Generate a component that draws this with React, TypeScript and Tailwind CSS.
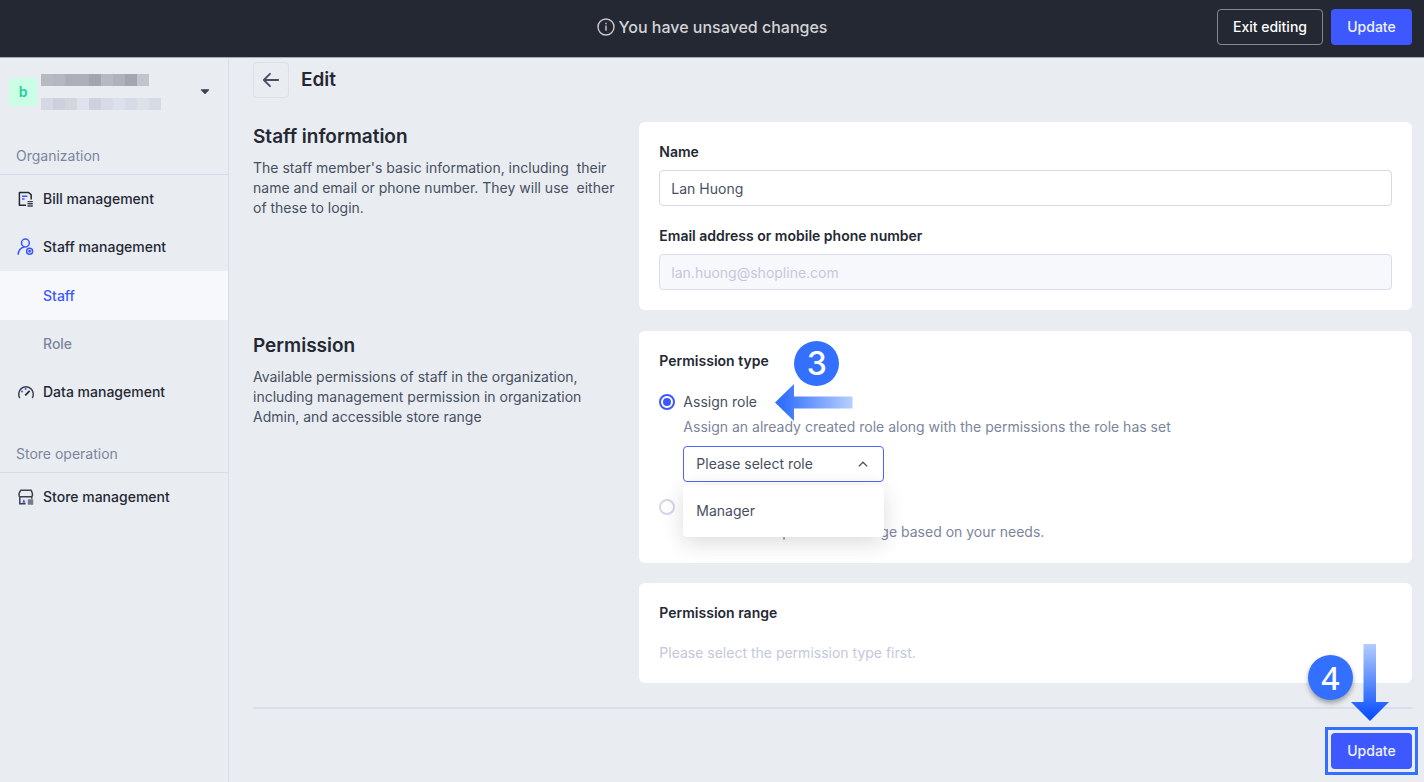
import { useState, type ReactNode } from "react";

const nameBlocks = ["bg-[#b8bac2]", "bg-[#b5b7bf]", "bg-[#adafb7]", "bg-[#adafb7]", "bg-[#a3a5af]", "bg-[#b7b9c1]", "bg-[#b0b2ba]", "bg-[#a3a5af]", "bg-[#c2c4cd]"];
const idBlocks = ["bg-[#d6d9e3]", "bg-[#cdd0dd]", "bg-[#d3d6df]", "bg-[#dfe2ec]", "bg-[#cfd2dc]", "bg-[#d7dae4]", "bg-[#dce0ea]", "bg-[#d6dae5]", "bg-[#dce0e9]", "bg-[#d6dae4]"];

function BillIcon() {
  return (
    <svg width="18" height="18" viewBox="0 0 18 18" fill="none" aria-hidden="true">
      <path d="M9 15.2H2.4V2.500h9.200l2.600 2.400v4.600" stroke="#242833" strokeWidth="1.5" strokeLinejoin="round" />
      <path d="M5 6.2h5.4M5 9h2.6" stroke="#3b56ff" strokeWidth="1.4" />
      <path d="M10.5 11.6h5.3M10.5 13.8h5.3M10.5 16h5.3" stroke="#3c404b" strokeWidth="1.4" />
    </svg>
  );
}

function StaffIcon() {
  return (
    <svg width="18" height="18" viewBox="0 0 18 18" fill="none" stroke="#3b56ff" strokeWidth="1.5" aria-hidden="true">
      <circle cx="8.4" cy="5" r="3.9" />
      <path d="M1.2 16.8c.1-4.2 2.4-6.9 6.2-7.7" />
      <circle cx="12.6" cy="13.2" r="3" />
      <circle cx="12.6" cy="13.2" r="0.7" />
    </svg>
  );
}

function DataIcon() {
  return (
    <svg width="18" height="18" viewBox="0 0 18 18" fill="none" aria-hidden="true">
      <path d="M2.8 15A7.3 7.3 0 1 1 15.2 15" stroke="#3c404b" strokeWidth="1.5" />
      <path d="M8.2 12.4l4.4-4.6" stroke="#242833" strokeWidth="1.7" />
      <circle cx="5" cy="8.6" r="1" fill="#3b56ff" />
      <circle cx="8.6" cy="6" r="1" fill="#3b56ff" />
    </svg>
  );
}

function StoreIcon() {
  return (
    <svg width="18" height="18" viewBox="0 0 18 18" fill="none" aria-hidden="true">
      <path d="M3.8 2.2h10.4l1.2 3.4v1.6a1.6 1.6 0 0 1-1.6 1.6H3.6A1.6 1.6 0 0 1 2 7.2V5.6z" stroke="#3c404b" strokeWidth="1.5" strokeLinejoin="round" />
      <path d="M2.8 8.8v7h5.8M14.8 8.8v2" stroke="#3c404b" strokeWidth="1.5" />
      <path d="M6.8 11.8v3M5.5 14.1h2.8" stroke="#3b56ff" strokeWidth="1.4" />
      <path d="M10.8 11.2h5.4v5.6h-5.4z" fill="#787b85" />
    </svg>
  );
}

function NavItem({ icon, children }: { icon: ReactNode; children: ReactNode }) {
  return (
    <a href="#" className="flex h-12 items-center gap-2 pl-[17px] font-medium text-[#242833]">
      {icon}
      {children}
    </a>
  );
}

function Section({ title, text, children }: { title: string; text: string; children: ReactNode }) {
  return (
    <section className="grid grid-cols-3">
      <div className="pr-4">
        <h2 className="pb-1.5 text-[19px] leading-[30px] font-semibold">{title}</h2>
        <p className="whitespace-pre-wrap text-[#474f5e]">{text}</p>
      </div>
      <div className="col-span-2 flex flex-col gap-5">{children}</div>
    </section>
  );
}

function UpdateButton() {
  return (
    <button type="button" className="h-9 min-w-[81px] rounded bg-[#3d58ff] px-4 font-medium text-[#f0f2ff]">
      Update
    </button>
  );
}

export default function App() {
  const [name, setName] = useState("Lan Huong");
  const [type, setType] = useState("role");

  return (
    <div className="flex min-h-screen flex-col bg-[#e9edf2] font-['Inter',sans-serif] text-sm leading-5 text-[#242833]">
      <header className="relative grid grid-cols-[1fr_auto_1fr] items-center bg-[#242833] pt-[9px] pb-3 shadow-[0_1px_0_#a9abb5]">
        <div className="col-start-2 flex items-center gap-1 text-base font-medium text-[#d3d4d6]">
          <svg width="18" height="18" viewBox="0 0 18 18" fill="none" stroke="#c8c9cc" strokeWidth="1.4" aria-hidden="true">
            <circle cx="9" cy="9" r="8" />
            <path d="M9 7.6v5.2M9 4.8v1.5" />
          </svg>
          You have unsaved changes
        </div>
        <div className="flex justify-end gap-2 pr-3">
          <button type="button" className="h-9 rounded border border-[#858892] px-[15px] font-medium text-white">
            Exit editing
          </button>
          <UpdateButton />
        </div>
      </header>

      <div className="flex flex-1">
        <aside className="w-[229px] shrink-0 border-r border-[#dadeea]">
          <div className="flex items-center pt-[17px] pr-[18px] pl-[9px]">
            <span className="flex size-7 items-center justify-center rounded bg-[#caffe5] font-semibold text-[#22cf9b]">b</span>
            <div className="ml-1 flex flex-1 flex-col gap-3">
              <div className="flex">
                {nameBlocks.map((c, i) => (
                  <span key={i} className={`h-3 w-3 ${c}`} />
                ))}
              </div>
              <div className="flex">
                {idBlocks.map((c, i) => (
                  <span key={i} className={`h-3 w-3 ${c}`} />
                ))}
              </div>
            </div>
            <button type="button" aria-label="Switch account">
              <svg width="10" height="6" viewBox="0 0 10 6" aria-hidden="true">
                <path d="M1.2.8h7.6L5 4.800z" fill="#3b4250" stroke="#3b4250" strokeLinejoin="round" />
              </svg>
            </button>
          </div>
          <nav>
            <h3 className="mt-9 border-b border-[#d4d9ec] pb-2 pl-4 text-[#7c859c]">Organization</h3>
            <NavItem icon={<BillIcon />}>Bill management</NavItem>
            <NavItem icon={<StaffIcon />}>Staff management</NavItem>
            <a href="#" className="flex h-[49px] items-center bg-[#f7f8fc] pl-[43px] font-medium text-[#3d58ff]">Staff</a>
            <a href="#" className="flex h-12 items-center pl-[43px] font-medium text-[#7c859c]">Role</a>
            <NavItem icon={<DataIcon />}>Data management</NavItem>
            <h3 className="mt-7 border-b border-[#d7dcea] pb-2 pl-4 text-[#7c859c]">Store operation</h3>
            <NavItem icon={<StoreIcon />}>Store management</NavItem>
          </nav>
        </aside>

        <main className="min-w-0 flex-1 pt-[5px] pr-3 pl-6">
          <div className="flex items-center gap-3 pb-6">
            <button type="button" aria-label="Back" className="flex size-9 items-center justify-center rounded border border-[#dadeed]">
              <svg width="18" height="16" viewBox="0 0 18 16" fill="none" stroke="#474f5e" strokeWidth="1.8" strokeLinecap="round" strokeLinejoin="round" aria-hidden="true">
                <path d="M16.2 8H1.8M8 1.8L1.8 8L8 14.2" />
              </svg>
            </button>
            <h1 className="text-[19px] leading-[30px] font-semibold">Edit</h1>
          </div>

          <div className="flex flex-col gap-[21px]">
            <Section title="Staff information" text={"The staff member's basic information, including  their name and email or phone number. They will use  either of these to login."}>
              <div className="flex flex-col rounded-md bg-white p-5">
                <label htmlFor="name" className="pb-2 font-semibold">Name</label>
                <input
                  id="name"
                  value={name}
                  onChange={(e) => setName(e.target.value)}
                  className="h-9 w-full rounded border border-[#d5d9e6] px-[11px] text-[#474f5e]"
                />
                <label htmlFor="contact" className="pt-5 pb-2 font-semibold">Email address or mobile phone number</label>
                <input
                  id="contact"
                  value="lan.huong@shopline.com"
                  disabled
                  className="h-9 w-full rounded border border-[#d9ddea] bg-[#f7f8fc] px-[11px] text-[#c4c8dc]"
                />
              </div>
            </Section>

            <Section title="Permission" text="Available permissions of staff in the organization, including management permission in organization Admin, and accessible store range">
              <fieldset className="rounded-md bg-white px-5 pt-5 pb-[21px]">
                <legend className="float-left w-full pb-[21px] font-semibold">Permission type</legend>
                <div className="clear-both grid grid-cols-[auto_1fr] items-center gap-x-2 gap-y-[5px]">
                  <input
                    id="assign-role"
                    type="radio"
                    name="permission"
                    checked={type === "role"}
                    onChange={() => setType("role")}
                    className="size-4 appearance-none rounded-full border-2 border-[#d3d7e8] checked:border-[#3d58ff] checked:bg-[#3d58ff] checked:bg-clip-content checked:p-0.5"
                  />
                  <div className="relative justify-self-start text-[#474f5e]">
                    <label htmlFor="assign-role">Assign role</label>
                    <div className="absolute bottom-[26px] left-[111px] flex size-[45px] items-center justify-center rounded-full bg-[#3370ff] text-[32px] font-medium text-white">
                      3
                    </div>
                    <svg width="78" height="38" viewBox="0 0 78 38" className="absolute -top-2 left-[92px]" aria-hidden="true">
                      <defs>
                        <linearGradient id="left-arrow" x1="0" x2="1">
                          <stop offset="0.1" stopColor="#3370ff" />
                          <stop offset="1" stopColor="#b8d0ff" />
                        </linearGradient>
                      </defs>
                      <path d="M0 18.5L19 0v12.5h58.5v12H19V37z" fill="url(#left-arrow)" />
                    </svg>
                  </div>
                  <p className="col-start-2 text-[#7c859c]">Assign an already created role along with the permissions the role has set</p>
                  <div className="relative col-start-2 mt-1 mb-2.5 w-[201px]">
                    <select aria-label="Role" className="block h-9 w-full appearance-none rounded border border-[#4d65ff] bg-white px-3 text-[#474f5e]">
                      <option>Please select role</option>
                    </select>
                    <svg width="10" height="6" viewBox="0 0 10 6" className="pointer-events-none absolute top-[15px] right-4" fill="none" stroke="#474f5e" strokeWidth="1.3" aria-hidden="true">
                      <path d="M.8 5.4L5 1.2l4.2 4.2" />
                    </svg>
                    <ul role="listbox" aria-label="Roles" className="absolute top-[39px] z-10 w-full rounded bg-white py-2 text-[#474f5e] shadow-[0_6px_22px_rgba(36,40,51,0.16)]">
                      <li role="option" aria-selected="false" className="px-[13px] py-2">Manager</li>
                    </ul>
                  </div>
                  <input
                    type="radio"
                    name="permission"
                    aria-label="Customize"
                    aria-describedby="custom-text"
                    checked={type === "custom"}
                    onChange={() => setType("custom")}
                    className="my-0.5 size-4 appearance-none rounded-full border-2 border-[#d3d7e8] checked:border-[#3d58ff] checked:bg-[#3d58ff] checked:bg-clip-content checked:p-0.5"
                  />
                  <p id="custom-text" className="col-start-2 row-start-5 text-[#7c859c]">Customize the permission range based on your needs.</p>
                </div>
              </fieldset>
              <div className="rounded-md bg-white p-5">
                <h3 className="pb-5 font-semibold">Permission range</h3>
                <p className="text-[#c4c8dc]">Please select the permission type first.</p>
              </div>
            </Section>
          </div>

          <footer className="mt-6 flex justify-end border-t-2 border-[#dadeea] pt-6">
            <div className="relative">
              <UpdateButton />
              <div className="pointer-events-none absolute -inset-1.5 border-[3px] border-[#3370ff]" />
              <div className="absolute right-[59px] bottom-[69px] flex size-[45px] items-center justify-center rounded-full bg-[#3370ff] font-['Noto_Sans',sans-serif] text-[32px] font-medium text-white shadow-[0_3px_5px_rgba(0,0,0,0.35)]">
                4
              </div>
              <svg width="38" height="77" viewBox="0 0 38 77" className="absolute right-[23px] bottom-12" aria-hidden="true">
                <defs>
                  <linearGradient id="down-arrow" x1="0" y1="0" x2="0" y2="1">
                    <stop offset="0" stopColor="#b4ccff" />
                    <stop offset="0.95" stopColor="#0a50ff" />
                  </linearGradient>
                </defs>
                <path d="M12.5 0h12.5v58H38L19 77 0 58h12.5z" fill="url(#down-arrow)" />
              </svg>
            </div>
          </footer>
        </main>
      </div>
    </div>
  );
}
